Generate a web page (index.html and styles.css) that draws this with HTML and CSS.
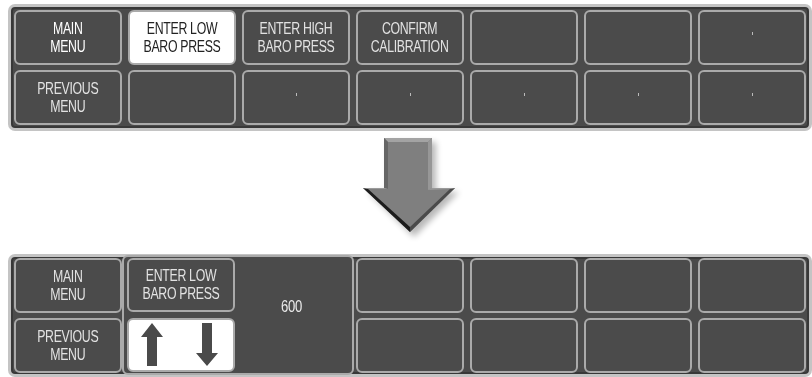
FILE: index.html
```html
<!DOCTYPE html>
<html lang="en">
<head>
  <meta charset="UTF-8">
  <title>Baro Calibration Menu</title>
  <link rel="stylesheet" href="styles.css">
</head>
<body>
  <!-- before: softkey menu -->
  <div class="panel panel-top">
    <div class="key key-strong"><span class="label">MAIN<br>MENU</span></div>
    <div class="key key-active"><span class="label">ENTER LOW<br>BARO PRESS</span></div>
    <div class="key"><span class="label">ENTER HIGH<br>BARO PRESS</span></div>
    <div class="key"><span class="label">CONFIRM<br>CALIBRATION</span></div>
    <div class="key"></div>
    <div class="key"></div>
    <div class="key"><span class="tick tick-up"></span></div>
    <div class="key"><span class="label">PREVIOUS<br>MENU</span></div>
    <div class="key"></div>
    <div class="key"><span class="tick"></span></div>
    <div class="key"><span class="tick"></span></div>
    <div class="key"><span class="tick"></span></div>
    <div class="key"><span class="tick"></span></div>
    <div class="key"><span class="tick"></span></div>
  </div>

  <div class="arrow-row">
    <svg width="110" height="123" viewBox="0 0 110 123">
      <defs>
        <filter id="shadow" x="-30%" y="-30%" width="160%" height="160%">
          <feGaussianBlur stdDeviation="3"/>
        </filter>
      </defs>
      <polygon points="33,11 81,11 81,61 104,61 59,106 13,61 33,61" fill="#000" opacity="0.28" filter="url(#shadow)"/>
      <polygon points="29,7 77,7 77,57 100,57 55,101 8,57 29,57" fill="#7f7f7f"/>
      <polygon points="29,7 77,7 73,11 33,11" fill="#a3a3a3"/>
      <polygon points="29,7 33,11 33,58 29,57" fill="#666"/>
      <polygon points="77,7 77,57 73,59 73,11" fill="#979797"/>
      <polygon points="8,57 13,58 55,96 55,101" fill="#1c1c1c"/>
      <polygon points="100,57 95,58 55,96 55,101" fill="#4a4a4a"/>
      <polygon points="8,57 29,57 33,58 13,58" fill="#9a9a9a"/>
      <polygon points="77,57 100,57 95,58 73,59" fill="#9a9a9a"/>
    </svg>
  </div>

  <!-- after: value entry -->
  <div class="panel panel-bottom">
    <div class="key"><span class="label">MAIN<br>MENU</span></div>
    <div class="entry">
      <div class="key"><span class="label">ENTER LOW<br>BARO PRESS</span></div>
      <div class="value"><span class="label">600</span></div>
      <div class="key key-active">
        <svg class="updown" width="84" height="44" viewBox="0 0 84 44">
          <polygon points="13,0 24,14 18,14 18,43 8,43 8,14 2,14" fill="#4a4a4a"/>
          <polygon points="63,0 73,0 73,30 79,30 68,43 57,30 63,30" fill="#4a4a4a"/>
        </svg>
      </div>
    </div>
    <div class="key"></div>
    <div class="key"></div>
    <div class="key"></div>
    <div class="key"></div>
    <div class="key"><span class="label">PREVIOUS<br>MENU</span></div>
    <div class="key"></div>
    <div class="key"></div>
    <div class="key"></div>
    <div class="key"></div>
  </div>
</body>
</html>
```

FILE: styles.css
```css
body {
  margin: 0;
  background-color: #fff;
  font-family: "Liberation Sans", Arial, sans-serif;
  width: 812px;
}

.panel {
  margin: 4px 0 0 8px;
  width: 804px;
  box-sizing: border-box;
  border: 3px solid #c4c4c4;
  border-radius: 7px;
  background-color: #4b4b4b;
  box-shadow: inset 0 0 0 2px #383838;
  padding: 3px;
  display: grid;
  grid-template-columns: repeat(7, 108px);
  grid-template-rows: 55px 55px;
  column-gap: 6px;
  row-gap: 5px;
}

.panel-bottom {
  margin-top: 0;
  padding-top: 1px;
  padding-bottom: 1px;
}

.key {
  box-sizing: border-box;
  border: 2px solid #aaa;
  border-radius: 6px;
  background-color: #4b4b4b;
  color: #e2e2e2;
  font-size: 16px;
  line-height: 18px;
  text-align: center;
  display: flex;
  align-items: center;
  justify-content: center;
}

/* the panel font is a condensed sans */
.label {
  display: inline-block;
  white-space: nowrap;
  letter-spacing: -0.4px;
  transform: scaleX(0.77);
}

.key-strong {
  color: #fff;
}

.key-active {
  background-color: #fff;
  color: #222;
}

.tick {
  width: 1px;
  height: 3px;
  background-color: #bbb;
  margin-top: -6px;
}

.tick-up {
  margin-top: -8px;
}

.arrow-row {
  display: flex;
  justify-content: center;
  padding-left: 8px;
  height: 123px;
}

.entry {
  grid-column: 2 / span 2;
  grid-row: 1 / span 2;
  margin: -3px -4px -2px -6px;
  border: 2px solid #aaa;
  border-radius: 6px;
  background-color: #4b4b4b;
  padding: 1px 3px;
  display: grid;
  grid-template-columns: 108px 1fr;
  grid-template-rows: 54px 54px;
  row-gap: 6px;
}

.entry .key:last-child {
  grid-column: 1;
  grid-row: 2;
}

.value {
  grid-column: 2;
  grid-row: 1 / span 2;
  display: flex;
  align-items: center;
  justify-content: center;
  padding-bottom: 16px;
  color: #ececec;
  font-size: 17px;
}

.updown {
  display: block;
}
```
